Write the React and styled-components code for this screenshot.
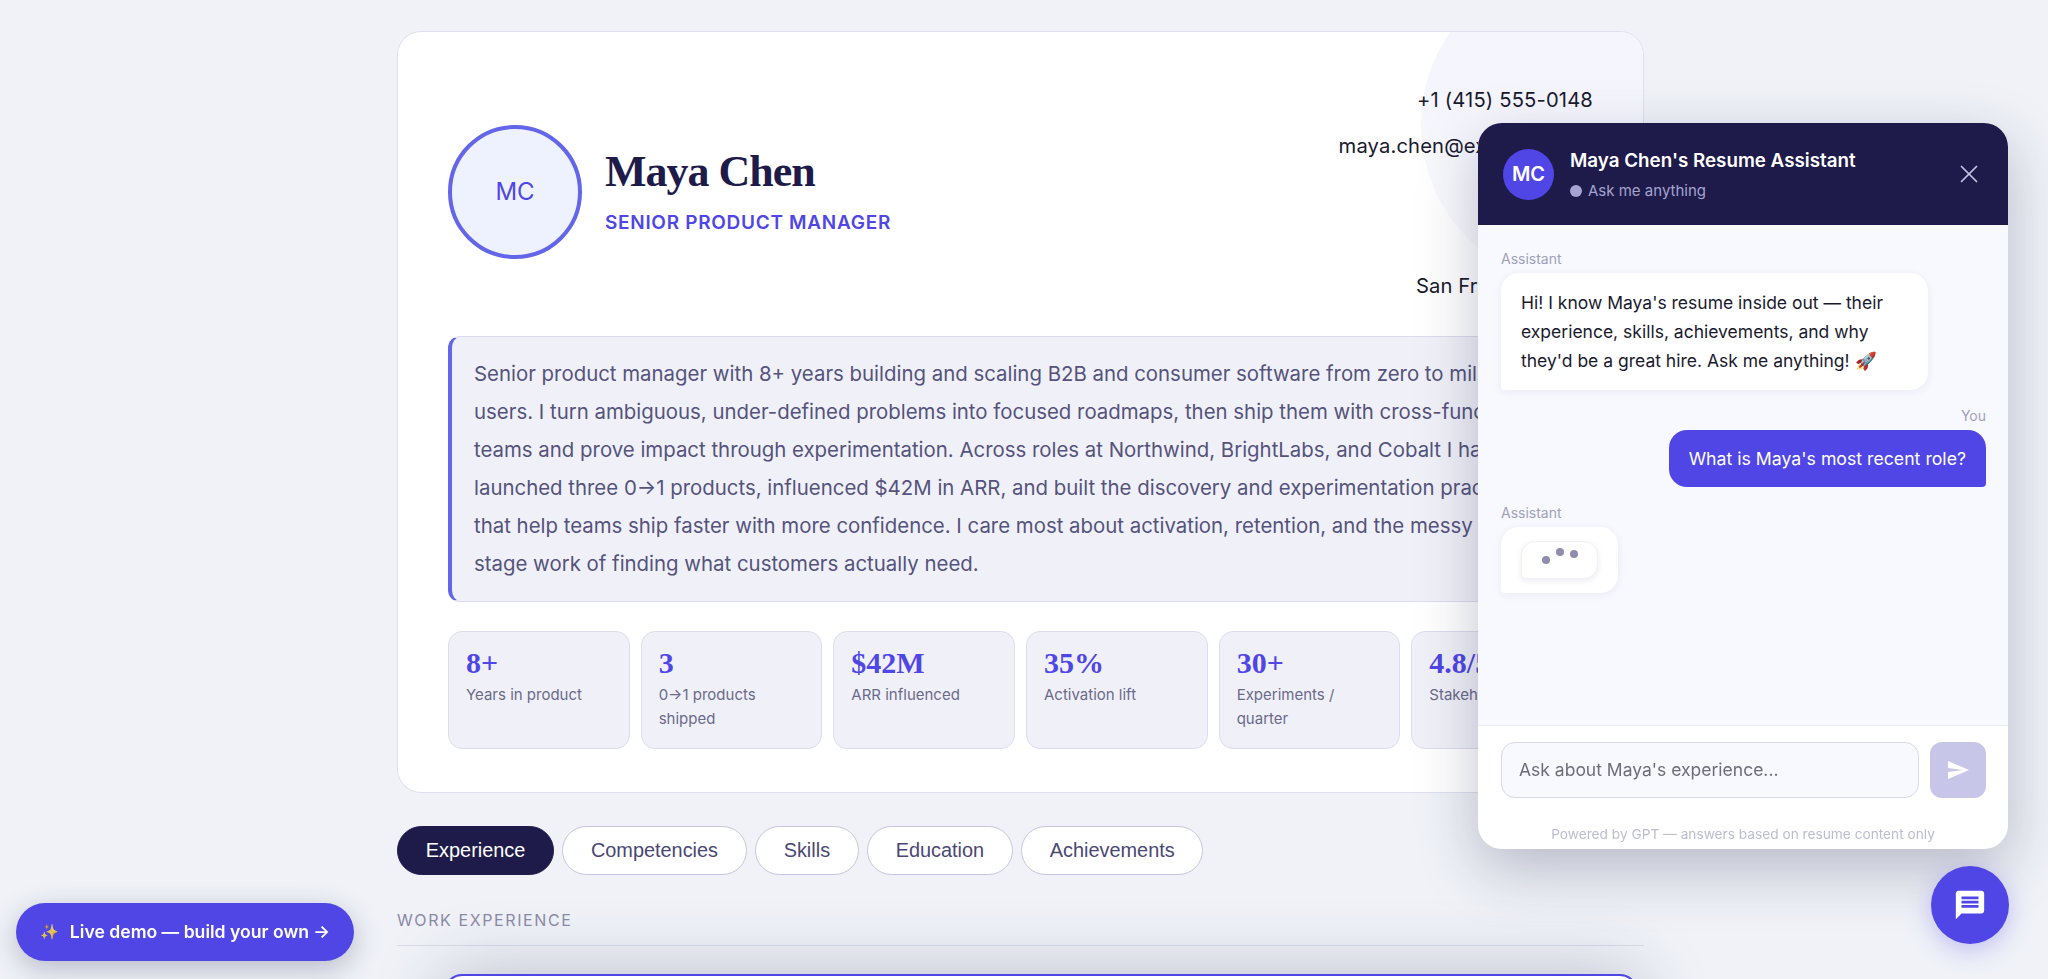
import React from 'react';
import styled, { createGlobalStyle } from 'styled-components';
import { MdMessage, MdSend } from 'react-icons/md';
import { X } from 'lucide-react';

const sans = `Inter, "Noto Sans", sans-serif`;
const serif = `"Liberation Serif", serif`;
const arial = `"Liberation Sans", Arial, sans-serif`;

const GlobalStyle = createGlobalStyle`
  html, body {
    margin: 0;
    height: 979px;
    overflow: hidden;
    background: #f0f2f8;
    font-family: ${sans};
  }
  * { box-sizing: border-box; }
`;

const Page = styled.main`
  width: 1644px;
  padding: 31px 0 0 397px;
`;

const HeroCard = styled.section`
  position: relative;
  overflow: hidden;
  height: 762px;
  padding: 0 50px;
  background: #fff;
  border: 1px solid #dfe0ef;
  border-radius: 24px;
`;

const Blob = styled.div`
  position: absolute;
  top: -70px;
  right: -103px;
  width: 325px;
  height: 325px;
  border-radius: 50%;
  background: linear-gradient(180deg, #f5f6fd 45%, #fcfcfe 100%);
`;

const Header = styled.header`
  position: relative;
  height: 304px;
  padding-top: 18px;
  display: flex;
  align-items: center;
  justify-content: space-between;
`;

const Identity = styled.div`
  display: flex;
  align-items: center;
  gap: 23px;
  margin-top: -3px;
`;

const Avatar = styled.div`
  width: 134px;
  height: 134px;
  border-radius: 50%;
  border: 4px solid #6366e8;
  background: #eef2ff;
  color: #4f46e5;
  font-size: 24px;
  display: flex;
  align-items: center;
  justify-content: center;
`;

const NameBlock = styled.div`
  padding-bottom: 3px;
`;

const Name = styled.h1`
  margin: 0 0 13px;
  font-family: ${serif};
  font-size: 44px;
  line-height: 52px;
  font-weight: 700;
  letter-spacing: -1px;
  color: #1e1b4b;
`;

const Role = styled.div`
  font-size: 19px;
  font-weight: 600;
  letter-spacing: 0.7px;
  color: #4f46e5;
`;

const Contact = styled.div`
  display: flex;
  flex-direction: column;
  align-items: flex-end;
  font-size: 20.2px;
  line-height: 46.4px;
  letter-spacing: 0.15px;
  color: #1a1a2e;
`;

const Summary = styled.p`
  position: relative;
  margin: 0;
  height: 266px;
  padding: 18px 0 0 22px;
  white-space: nowrap;
  overflow: hidden;
  font-size: 20.4px;
  line-height: 38px;
  color: #55537c;
  background: #f0f1f8;
  border: 1px solid #dcdcef;
  border-left: 4px solid #6366e8;
  border-radius: 12px;
`;

const Stats = styled.div`
  position: relative;
  display: grid;
  grid-template-columns: repeat(6, 1fr);
  gap: 11px;
  margin-top: 29px;
`;

const Stat = styled.div`
  height: 118px;
  padding: 11px 17px 0;
  background: #f0f1f8;
  border: 1px solid #dcdcef;
  border-radius: 14px;
`;

const StatValue = styled.div`
  font-family: ${serif};
  font-size: 30px;
  line-height: 40px;
  font-weight: 700;
  color: #4f46e5;
`;

const StatLabel = styled.div`
  font-size: 15px;
  line-height: 24px;
  color: #6b6a8a;
`;

const Tabs = styled.nav`
  display: flex;
  gap: 8px;
  margin-top: 33px;
`;

const Tab = styled.button`
  height: 49px;
  padding: 0 27.8px;
  font-family: ${arial};
  font-size: 19.9px;
  color: ${(p) => (p.$active ? '#fff' : '#4a4872')};
  background: ${(p) => (p.$active ? '#1e1b4b' : '#fff')};
  border: 1px solid ${(p) => (p.$active ? '#1e1b4b' : '#c5c5e0')};
  border-radius: 25px;
`;

const SectionLabel = styled.h2`
  margin: 33px 0 0;
  padding-bottom: 13px;
  font-size: 16px;
  line-height: 24px;
  font-weight: 400;
  letter-spacing: 1.6px;
  text-transform: uppercase;
  color: #8a89a5;
  border-bottom: 1px solid #d9daea;
`;

const JobCard = styled.article`
  height: 200px;
  margin: 28px 6px 0 47px;
  background: #fff;
  border: 2px solid #4f46e5;
  border-radius: 18px;
  box-shadow: 0 0 70px rgba(40, 44, 80, 0.26);
`;

const DemoPill = styled.a`
  position: fixed;
  left: 16px;
  bottom: 18px;
  height: 58px;
  width: 338px;
  padding-bottom: 2px;
  display: flex;
  align-items: center;
  justify-content: center;
  gap: 11px;
  font-family: ${sans};
  font-size: 17.6px;
  font-weight: 600;
  color: #fff;
  background: #4f46e5;
  border-radius: 29px;
  box-shadow: 0 8px 28px rgba(40, 44, 80, 0.28);
`;

const Sparkle = styled.span`
  font-size: 15px;
  opacity: 0.85;
`;

const ChatPanel = styled.aside`
  position: fixed;
  right: 40px;
  top: 123px;
  width: 530px;
  height: 726px;
  display: flex;
  flex-direction: column;
  overflow: hidden;
  background: #fff;
  border-radius: 24px;
  box-shadow: 0 20px 60px rgba(30, 34, 70, 0.27);
`;

const ChatHeader = styled.header`
  flex: none;
  height: 102px;
  padding: 0 24px 0 25px;
  display: flex;
  align-items: center;
  gap: 16px;
  background: #1e1b4b;
`;

const ChatAvatar = styled.div`
  flex: none;
  width: 51px;
  height: 51px;
  border-radius: 50%;
  background: #4f46e5;
  color: #fff;
  font-size: 20px;
  font-weight: 600;
  display: flex;
  align-items: center;
  justify-content: center;
`;

const ChatTitles = styled.div`
  flex: 1;
`;

const ChatTitle = styled.div`
  font-size: 18.8px;
  line-height: 28px;
  font-weight: 600;
  color: #fff;
`;

const ChatStatus = styled.div`
  display: flex;
  align-items: center;
  gap: 6px;
  margin-top: 6px;
  font-size: 15px;
  line-height: 20px;
  color: #a5a3d0;
`;

const StatusDot = styled.span`
  width: 12px;
  height: 12px;
  border-radius: 50%;
  background: #a5a3d0;
`;

const CloseButton = styled.button`
  padding: 0;
  display: flex;
  background: none;
  border: 0;
  color: #c4c3e3;
`;

const Messages = styled.div`
  flex: 1;
  padding: 24px 22px 0 23px;
  display: flex;
  flex-direction: column;
  align-items: flex-start;
  background: #f8f9ff;
  border-bottom: 1px solid #eceef8;
`;

const Sender = styled.div`
  font-size: 14px;
  line-height: 20px;
  color: #a0a0b8;
  align-self: ${(p) => (p.$mine ? 'flex-end' : 'flex-start')};
  margin-bottom: 4px;
`;

const BotBubble = styled.div`
  width: 427px;
  padding: 15px 20px;
  margin-bottom: 16px;
  font-size: 17.5px;
  line-height: 29px;
  color: #1a1a2e;
  background: #fff;
  border-radius: 18px 18px 18px 4px;
  box-shadow: 0 2px 8px rgba(30, 30, 80, 0.07);
`;

const UserBubble = styled.div`
  align-self: flex-end;
  height: 57px;
  padding: 0 20px;
  margin-bottom: 16px;
  display: flex;
  align-items: center;
  font-size: 17.7px;
  color: #fff;
  background: #4f46e5;
  border-radius: 18px 18px 4px 18px;
`;

const TypingBubble = styled.div`
  width: 117px;
  height: 66px;
  padding: 14px 20px;
  background: #fff;
  border-radius: 18px 18px 18px 4px;
  box-shadow: 0 2px 8px rgba(30, 30, 80, 0.07);
`;

const TypingInner = styled.div`
  width: 77px;
  height: 38px;
  display: flex;
  justify-content: center;
  gap: 6px;
  background: #fff;
  border: 1px solid #f0f0f7;
  border-radius: 14px 14px 14px 4px;
  box-shadow: 0 2px 6px rgba(30, 30, 80, 0.08);
`;

const Dot = styled.span`
  width: 8px;
  height: 8px;
  margin-top: ${(p) => p.$top}px;
  border-radius: 50%;
  background: #8f8dae;
`;

const Composer = styled.form`
  flex: none;
  height: 72px;
  padding: 16px 22px 0 23px;
  display: flex;
  gap: 11px;
`;

const Field = styled.input`
  flex: 1;
  height: 56px;
  padding: 0 17px 2px;
  font-family: ${sans};
  font-size: 17.5px;
  background: #f8f9ff;
  border: 1px solid #d7d8ec;
  border-radius: 14px;
  &::placeholder { color: #6d6d78; opacity: 1; }
`;

const SendButton = styled.button`
  flex: none;
  width: 56px;
  height: 56px;
  padding: 0;
  display: flex;
  align-items: center;
  justify-content: center;
  color: #fff;
  background: #c7c6e8;
  border: 0;
  border-radius: 12px;
`;

const PoweredBy = styled.div`
  flex: none;
  height: 51px;
  padding-top: 26px;
  text-align: center;
  font-size: 13.7px;
  line-height: 20px;
  color: #bcbccf;
`;

const Fab = styled.button`
  position: fixed;
  right: 39px;
  bottom: 35px;
  width: 78px;
  height: 78px;
  padding: 0;
  display: flex;
  align-items: center;
  justify-content: center;
  color: #fff;
  background: #4f46e5;
  border: 0;
  border-radius: 50%;
  box-shadow: 0 6px 24px rgba(79, 70, 229, 0.3);
`;

const stats = [
  { value: '8+', label: 'Years in product' },
  { value: '3', label: '0→1 products shipped' },
  { value: '$42M', label: 'ARR influenced' },
  { value: '35%', label: 'Activation lift' },
  { value: '30+', label: 'Experiments / quarter' },
  { value: '4.8/5', label: 'Stakeholder NPS' },
];

const tabs = ['Experience', 'Competencies', 'Skills', 'Education', 'Achievements'];

export default function App() {
  return (
    <>
      <GlobalStyle />
      <Page>
        <HeroCard>
          <Blob />
          <Header>
            <Identity>
              <Avatar>MC</Avatar>
              <NameBlock>
                <Name>Maya Chen</Name>
                <Role>SENIOR PRODUCT MANAGER</Role>
              </NameBlock>
            </Identity>
            <Contact>
              <span>+1 (415) 555-0148</span>
              <span>maya.chen@example.com</span>
              <span>LinkedIn</span>
              <span>Portfolio</span>
              <span>San Francisco, CA</span>
            </Contact>
          </Header>
          <Summary>
            Senior product manager with 8+ years building and scaling B2B and consumer software from zero to millions of<br />
            users. I turn ambiguous, under-defined problems into focused roadmaps, then ship them with cross-functional<br />
            teams and prove impact through experimentation. Across roles at Northwind, BrightLabs, and Cobalt I have<br />
            launched three 0→1 products, influenced $42M in ARR, and built the discovery and experimentation practices<br />
            that help teams ship faster with more confidence. I care most about activation, retention, and the messy early-<br />
            stage work of finding what customers actually need.
          </Summary>
          <Stats>
            {stats.map((s) => (
              <Stat key={s.value}>
                <StatValue>{s.value}</StatValue>
                <StatLabel>{s.label}</StatLabel>
              </Stat>
            ))}
          </Stats>
        </HeroCard>
        <Tabs>
          {tabs.map((t, i) => (
            <Tab key={t} $active={i === 0}>{t}</Tab>
          ))}
        </Tabs>
        <SectionLabel>Work Experience</SectionLabel>
        <JobCard />
      </Page>

      <DemoPill>
        <Sparkle>✨</Sparkle>
        <span>Live demo — build your own →</span>
      </DemoPill>

      <ChatPanel>
        <ChatHeader>
          <ChatAvatar>MC</ChatAvatar>
          <ChatTitles>
            <ChatTitle>Maya Chen's Resume Assistant</ChatTitle>
            <ChatStatus><StatusDot />Ask me anything</ChatStatus>
          </ChatTitles>
          <CloseButton><X size={30} strokeWidth={1.4} /></CloseButton>
        </ChatHeader>
        <Messages>
          <Sender>Assistant</Sender>
          <BotBubble>
            Hi! I know Maya's resume inside out — their experience, skills, achievements, and why they'd be a great hire. Ask me anything! 🚀
          </BotBubble>
          <Sender $mine>You</Sender>
          <UserBubble>What is Maya's most recent role?</UserBubble>
          <Sender>Assistant</Sender>
          <TypingBubble>
            <TypingInner>
              <Dot $top={14} />
              <Dot $top={6} />
              <Dot $top={8} />
            </TypingInner>
          </TypingBubble>
        </Messages>
        <Composer>
          <Field placeholder="Ask about Maya's experience..." />
          <SendButton type="button"><MdSend size={24} /></SendButton>
        </Composer>
        <PoweredBy>Powered by GPT — answers based on resume content only</PoweredBy>
      </ChatPanel>

      <Fab><MdMessage size={34} /></Fab>
    </>
  );
}
